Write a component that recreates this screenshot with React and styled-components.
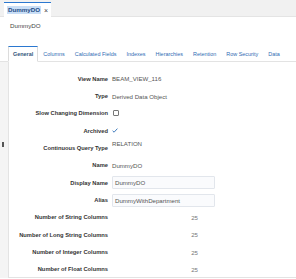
import React from 'react'
import styled, { createGlobalStyle } from "styled-components";

const GlobalStyle = createGlobalStyle`
  html, body {
    margin: 0;
    padding: 0;
    background: #ffffff;
    font-family: "Liberation Sans", Arial, sans-serif;
  }
  * { box-sizing: border-box; }
`;

const tabs = ["General", "Columns", "Calculated Fields", "Indexes", "Hierarchies", "Retention", "Row Security", "Data"];

const counts = [
  ["Number of String Columns", 25],
  ["Number of Long String Columns", 25],
  ["Number of Integer Columns", 25],
  ["Number of Float Columns", 25],
];

const Check = () => (
  <svg width="6" height="5" viewBox="0 0 6 5">
    <path d="M0.6 2.8 L2.1 4.2 L5.4 0.6" fill="none" stroke="#2d6db5" strokeWidth="0.9" />
  </svg>
);

const App = () => {
  return (
    <Page>
      <GlobalStyle />
      <TopBar>
        <DocTab>
          <DocTitle>DummyDO</DocTitle>
          <Close>×</Close>
        </DocTab>
      </TopBar>
      <Subtitle>DummyDO</Subtitle>
      <TabRow>
        {tabs.map((t, i) => (
          <Tab key={t} $active={i === 0}>{t}</Tab>
        ))}
      </TabRow>
      <Body>
        <Strip>
          <Handle />
        </Strip>
        <Panel>
          <Form>
            <Label>View Name</Label>
            <Value>BEAM_VIEW_116</Value>
            <Label>Type</Label>
            <Value>Derived Data Object</Value>
            <Label>Slow Changing Dimension</Label>
            <Value><Box /></Value>
            <Label>Archived</Label>
            <Value><Check /></Value>
            <Label>Continuous Query Type</Label>
            <Value $top>RELATION</Value>
            <Label>Name</Label>
            <Value>DummyDO</Value>
            <Label>Display Name</Label>
            <Value><Field>DummyDO</Field></Value>
            <Label>Alias</Label>
            <Value><Field>DummyWithDepartment</Field></Value>
            {counts.map(([l, n]) => (
              <React.Fragment key={l}>
                <Label>{l}</Label>
                <Value><Count>{n}</Count></Value>
              </React.Fragment>
            ))}
          </Form>
        </Panel>
      </Body>
    </Page>
  )
}

export default App

const Page = styled.div`
  width: 296px;
  height: 279px;
  overflow: hidden;
  background: #fff;
`;

const TopBar = styled.div`
  height: 17px;
  background: #f1f1f1;
  border-bottom: 1px solid #e4e4e4;
  display: flex;
  align-items: flex-end;
  padding-left: 4px;
`;

const DocTab = styled.div`
  height: 15px;
  margin-bottom: -1px;
  background: #fff;
  border-top: 1.5px solid #2b78d0;
  display: flex;
  align-items: center;
  gap: 3px;
  padding: 0 3px 0 3px;
`;

const DocTitle = styled.span`
  font-size: 6.2px;
  font-weight: bold;
  color: #1d4a84;
  background: #c9def6;
  padding: 1px 1px;
  line-height: 6px;
`;

const Close = styled.span`
  font-size: 7px;
  color: #444;
  line-height: 7px;
`;

const Subtitle = styled.div`
  font-size: 6.2px;
  color: #444;
  padding: 5px 0 0 10px;
  height: 29px;
`;

const TabRow = styled.div`
  display: flex;
  align-items: flex-end;
  height: 16px;
  padding-left: 8px;
  border-bottom: 1px solid #e3e3e3;
  white-space: nowrap;
`;

const Tab = styled.div`
  height: 16px;
  margin-bottom: -1px;
  padding: 0 4px;
  display: flex;
  align-items: center;
  font-size: 5.45px;
  color: ${p => p.$active ? "#34557c" : "#2f6cb3"};
  font-weight: ${p => p.$active ? "bold" : "normal"};
  background: ${p => p.$active ? "#fff" : "transparent"};
  border: 1px solid ${p => p.$active ? "#dcdcdc" : "transparent"};
  border-top: 1.5px solid ${p => p.$active ? "#2b78d0" : "transparent"};
  border-bottom: 1px solid ${p => p.$active ? "#fff" : "transparent"};
`;

const Body = styled.div`
  display: flex;
  height: 216px;
`;

const Strip = styled.div`
  width: 8px;
  background: #f4f4f4;
  display: flex;
  align-items: center;
  padding-left: 2px;
  padding-bottom: 52px;
`;

const Handle = styled.div`
  width: 1.5px;
  height: 5px;
  background: #555;
`;

const Panel = styled.div`
  flex: 1;
  border-left: 1px solid #e3e3e3;
  border-bottom: 1px solid #e3e3e3;
  padding-top: 8px;
`;

const Form = styled.div`
  display: grid;
  grid-template-columns: 99px 1fr;
  grid-auto-rows: 17.35px;
  column-gap: 4px;
`;

const Label = styled.div`
  font-size: 5.75px;
  font-weight: bold;
  color: #333;
  text-align: right;
  display: flex;
  align-items: center;
  justify-content: flex-end;
  white-space: nowrap;
`;

const Value = styled.div`
  font-size: 6.1px;
  color: #555;
  display: flex;
  align-items: ${p => p.$top ? "flex-start" : "center"};
  padding-top: ${p => p.$top ? "1px" : "0"};
  white-space: nowrap;
`;

const Box = styled.span`
  width: 6px;
  height: 6px;
  border: 0.8px solid #777;
  border-radius: 1px;
  margin-left: 1px;
`;

const Field = styled.div`
  width: 103px;
  height: 13px;
  border: 1px solid #e2e6ec;
  background: #fafbfd;
  border-radius: 1px;
  padding-left: 2px;
  display: flex;
  align-items: center;
`;

const Count = styled.span`
  width: 86px;
  text-align: right;
  color: #777;
`;
